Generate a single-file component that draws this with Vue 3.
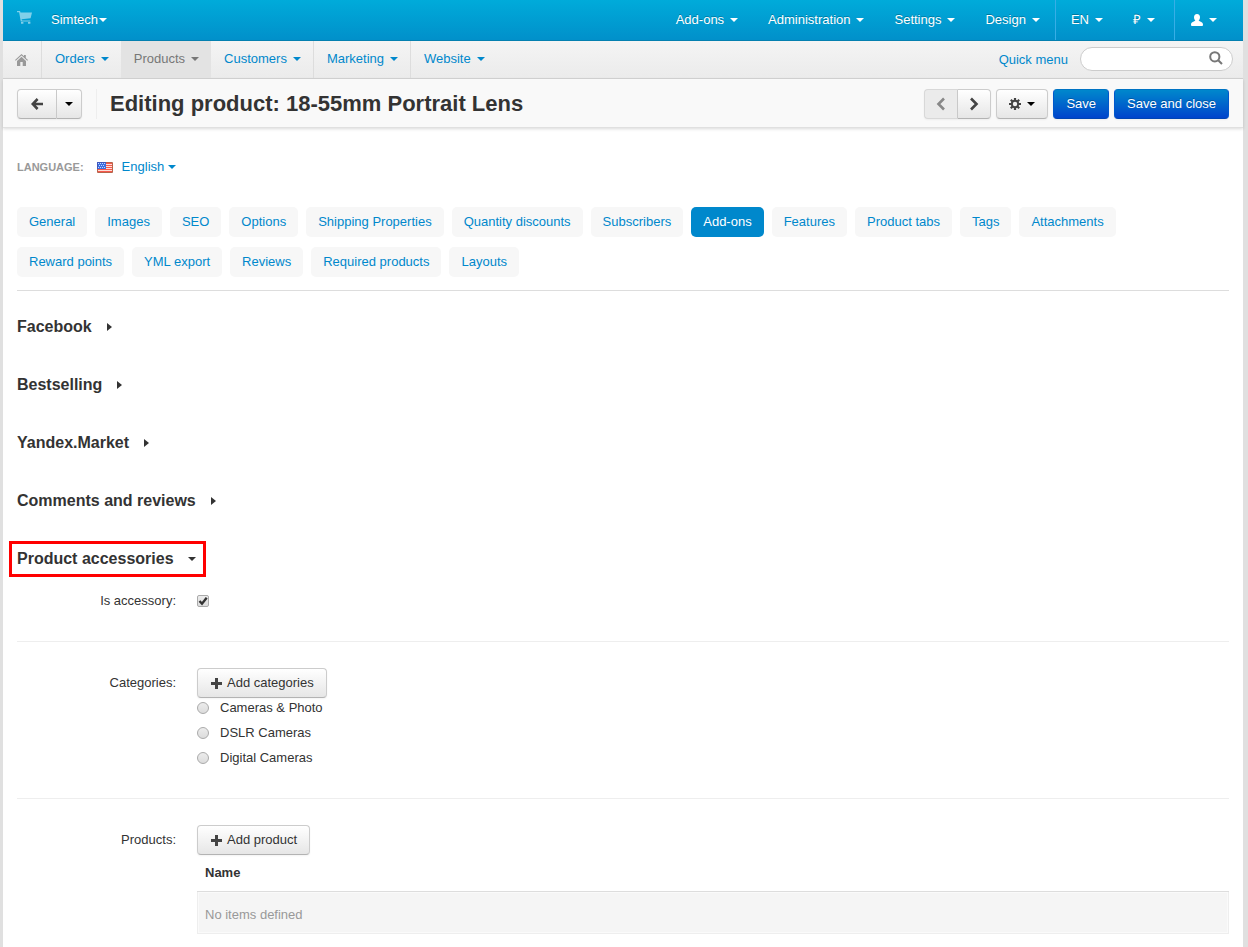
<script setup>
import { ref } from 'vue'

const topMenu = ['Add-ons', 'Administration', 'Settings', 'Design']
const mainMenu = ['Orders', 'Products', 'Customers', 'Marketing', 'Website']
const tabs = [
  'General', 'Images', 'SEO', 'Options', 'Shipping Properties', 'Quantity discounts',
  'Subscribers', 'Add-ons', 'Features', 'Product tabs', 'Tags', 'Attachments',
  'Reward points', 'YML export', 'Reviews', 'Required products', 'Layouts',
]
const activeTab = ref('Add-ons')
const collapsed = ['Facebook', 'Bestselling', 'Yandex.Market', 'Comments and reviews']
const categories = ['Cameras & Photo', 'DSLR Cameras', 'Digital Cameras']
const isAccessory = ref(true)
const category = ref('')
const query = ref('')
</script>

<template>
  <div class="page">
    <nav class="topbar" aria-label="Administration">
      <a href="#" class="cart" aria-label="Storefront">
        <svg width="15" height="13" viewBox="0 0 15 13"><path d="M0 0h3l.5 1.6H15l-1.4 5.6-9 1 .3 1.2h8.400v1.2H3.800L2.100 1.2H0zM4 11h2.400v1.800H4zM11 11h2.400v1.800H11z" /></svg>
      </a>
      <a href="#" class="store">Simtech<i class="caret"></i></a>
      <div class="top-menu">
        <a v-for="m in topMenu" :key="m" href="#">{{ m }}<i class="caret"></i></a>
      </div>
      <div class="top-menu divided locale">
        <a href="#">EN<i class="caret"></i></a>
        <a href="#" class="currency">₽<i class="caret"></i></a>
      </div>
      <div class="top-menu divided account">
        <a href="#" aria-label="Account">
          <svg width="12" height="12" viewBox="0 0 12 12"><path d="M6 0c2 0 3 1.300 3 3.200C9 5 8 6.200 7.600 6.600c.2.900 4.400 1.200 4.400 3.900 0 1-.4 1.500-1.300 1.500H1.300C.4 12 0 11.500 0 10.500 0 7.800 4.200 7.500 4.400 6.600 4 6.200 3 5 3 3.200 3 1.300 4 0 6 0z" /></svg>
          <i class="caret"></i>
        </a>
      </div>
    </nav>

    <nav class="subnav" aria-label="Main">
      <a href="#" class="home" aria-label="Home">
        <svg width="13" height="12" viewBox="0 0 13 12"><path d="M6.500 0 9 2.300V1h1.800v3L13 6.100l-.7.700L6.500 1.600.7 6.800 0 6.100zM6.500 2.800 11 6.900V12H7.700V8H5.300v4H2V6.900z" /></svg>
      </a>
      <a v-for="m in mainMenu" :key="m" href="#" class="menu" :class="{ active: m === 'Products' }">{{ m }}<i class="caret"></i></a>
      <a href="#" class="quick">Quick menu</a>
      <form class="search" @submit.prevent>
        <input v-model="query" type="text" aria-label="Search" />
        <button type="submit" aria-label="Find">
          <svg width="14" height="14" viewBox="0 0 14 14" fill="none" stroke="#777" stroke-width="2"><circle cx="5.800" cy="5.800" r="4.600" /><path d="M9.200 9.200 13 13" /></svg>
        </button>
      </form>
    </nav>

    <header class="actions">
      <div class="group">
        <button class="btn back" aria-label="Back">
          <svg width="12" height="12" viewBox="0 0 12 12" fill="none" stroke="#444" stroke-width="2.600"><path d="M6.600 1 1.700 6l4.900 5M2 6h10" /></svg>
        </button>
        <button class="btn more" aria-label="Recently viewed"><i class="caret"></i></button>
      </div>
      <h1>Editing product: 18-55mm Portrait Lens</h1>
      <div class="group pager">
        <button class="btn" disabled aria-label="Previous">
          <svg width="10" height="14" viewBox="0 0 10 14" fill="none" stroke="#888" stroke-width="2.600"><path d="M8 1.500 2.500 7 8 12.500" /></svg>
        </button>
        <button class="btn" aria-label="Next">
          <svg width="10" height="14" viewBox="0 0 10 14" fill="none" stroke="#444" stroke-width="2.600"><path d="M2 1.500 7.500 7 2 12.500" /></svg>
        </button>
      </div>
      <button class="btn gear" aria-label="Tools">
        <svg width="12" height="12" viewBox="0 0 12 12"><g stroke="#444" stroke-width="2.200"><path d="M6 0v12M0 6h12M1.800 1.800l8.400 8.400M10.200 1.800l-8.400 8.400" /></g><circle cx="6" cy="6" r="4.200" fill="#444" /><circle cx="6" cy="6" r="2.200" fill="#f3f3f3" /></svg>
        <i class="caret"></i>
      </button>
      <button class="btn primary">Save</button>
      <button class="btn primary">Save and close</button>
    </header>

    <main>
      <div class="language">
        <span class="language-label">LANGUAGE:</span>
        <svg width="16" height="11" viewBox="0 0 16 11"><path fill="#fff" d="M0 0h16v11H0z" /><path fill="#f8584c" d="M0 1h16v1H0zM0 3h16v1H0zM0 5h16v1H0zM0 7h16v1H0zM0 9h16v1H0z" /><path fill="#fde0da" d="M8 2h8v1H8zM8 4h8v1H8zM8 6h8v1H8zM0 8h16v1H0z" /><path fill="#3c6fe0" d="M0 0h9v7H0z" /><path fill="#c4d7ff" d="M1 1h1v1H1zM3 1h1v1H3zM5 1h1v1H5zM7 1h1v1H7zM2 3h1v1H2zM4 3h1v1H4zM6 3h1v1H6zM1 5h1v1H1zM3 5h1v1H3zM5 5h1v1H5zM7 5h1v1H7z" /><path fill="none" stroke="#b5654c" d="M.5 7v3.500h15V.5H9" /><path fill="none" stroke="#4056ba" d="M9 .5H.5V7" /></svg>
        <a href="#">English<i class="caret"></i></a>
      </div>

      <div class="tabs" role="tablist">
        <button v-for="t in tabs" :key="t" role="tab" :aria-selected="t === activeTab" :class="{ active: t === activeTab }" @click="activeTab = t">{{ t }}</button>
      </div>

      <h4 v-for="s in collapsed" :key="s"><button>{{ s }}<i class="arrow"></i></button></h4>
      <h4 class="marked"><button aria-expanded="true">Product accessories<i class="caret"></i></button></h4>

      <div class="row accessory">
        <label for="is-accessory">Is accessory:</label>
        <div class="tick">
          <input id="is-accessory" v-model="isAccessory" type="checkbox" />
          <svg v-if="isAccessory" width="12" height="12" viewBox="0 0 12 12" fill="none" stroke="#333" stroke-width="2.400"><path d="M2.500 6 5 8.700 9.700 2.800" /></svg>
        </div>
      </div>

      <div class="row categories">
        <span class="name">Categories:</span>
        <div>
          <button class="btn add">
            <svg width="11" height="11" viewBox="0 0 11 11"><path d="M4 0h3v4h4v3H7v4H4V7H0V4h4z" /></svg>Add categories
          </button>
          <label v-for="c in categories" :key="c" class="option">
            <input v-model="category" type="radio" name="category" :value="c" />{{ c }}
          </label>
        </div>
      </div>

      <div class="row products">
        <span class="name">Products:</span>
        <div>
          <button class="btn add">
            <svg width="11" height="11" viewBox="0 0 11 11"><path d="M4 0h3v4h4v3H7v4H4V7H0V4h4z" /></svg>Add product
          </button>
          <table>
            <thead><tr><th>Name</th></tr></thead>
            <tbody><tr><td>No items defined</td></tr></tbody>
          </table>
        </div>
      </div>
    </main>
  </div>
</template>

<style>
body {
  background: #e0e0e0;
}
</style>

<style scoped>
.page {
  box-sizing: border-box;
  min-height: 100vh;
  margin: 0 5px 0 3px;
  background: #fff;
  color: #333;
  font: 13px/20px "Liberation Sans", Arial, sans-serif;
}
.page * { box-sizing: border-box; }
a { color: #08c; text-decoration: none; }
button, input { margin: 0; font: inherit; }
svg { display: block; flex: none; }
.caret {
  flex: none;
  width: 0;
  height: 0;
  border: 4px solid transparent;
  border-top-color: currentColor;
  border-bottom: 0;
}

.topbar {
  display: flex;
  height: 41px;
  padding-right: 11px;
  border-bottom: 1px solid #0480b0;
  background: linear-gradient(#00abda, #0190ca);
}
.topbar a {
  display: flex;
  align-items: center;
  gap: 6px;
  color: #fff;
  text-shadow: 0 -1px 0 rgba(0, 0, 0, .25);
}
.topbar svg { fill: #fff; }
.topbar .cart { padding: 0 19px 6px 14px; }
.cart svg { opacity: .5; }
.topbar .store { gap: 1px; margin-right: auto; }
.top-menu { display: flex; }
.top-menu a { padding: 0 15px; }
.divided { border-left: 1px solid #38aee6; }
.locale .currency { padding-right: 19px; font-size: 13px; }
.account a { padding-left: 16px; }

.subnav {
  display: flex;
  align-items: center;
  height: 38px;
  padding-right: 10px;
  border-bottom: 1px solid #d4d4d4;
  background: linear-gradient(#f4f4f4, #ebebeb);
}
.home, .menu { display: flex; align-items: center; height: 37px; }
.home { width: 39px; padding-left: 12px; border-right: 1px solid #ddd; }
.home svg { fill: #999; }
.menu { gap: 6px; padding: 0 12px 2px 13px; border-right: 1px solid #ddd; }
.menu:nth-of-type(2), .menu:nth-of-type(3), .menu:nth-of-type(6) { border-right: 0; }
.menu.active { background: #e3e3e3; color: #777; }
.quick { margin-left: auto; margin-right: 12px; }
.search { display: flex; width: 153px; height: 24px; margin-bottom: 2px; border: 1px solid #ccc; border-radius: 12px; background: #fff; }
.search input { flex: 1; min-width: 0; padding: 0 0 0 12px; border: 0; border-radius: 12px; background: transparent; outline: 0; }
.search button { padding: 0 9px 2px; border: 0; background: transparent; }

.actions {
  display: flex;
  align-items: center;
  gap: 5px;
  height: 49px;
  padding: 2px 14px 0;
  border-bottom: 1px solid #e0e0e0;
  background: #f9f9f9;
  box-shadow: 0 1px 3px rgba(0, 0, 0, .15);
}
.actions h1 {
  flex: 1;
  margin: 0 0 0 9px;
  padding-left: 13px;
  border-left: 1px solid #eee;
  font-size: 22px;
  line-height: 30px;
}
.btn {
  display: flex;
  align-items: center;
  justify-content: center;
  height: 30px;
  padding: 0 12px;
  border: 1px solid #ccc;
  border-bottom-color: #b3b3b3;
  border-radius: 4px;
  background: linear-gradient(#fff, #e6e6e6);
  box-shadow: 0 1px 2px rgba(0, 0, 0, .05);
  color: #333;
}
.btn .caret { border-top-color: #000; }
.btn:disabled { background: #ebebeb; border-color: #d8d8d8; }
.group { display: flex; }
.group .btn:first-child { border-radius: 4px 0 0 4px; }
.group .btn:last-child { border-left: 0; border-radius: 0 4px 4px 0; }
.back { width: 40px; }
.more { width: 25px; padding: 0; }
.pager .btn { width: 34px; padding: 0; }
.pager .btn:first-child { border-right-color: #ccc; }
.pager .btn:last-child { width: 33px; }
.gear { gap: 6px; width: 52px; }
.primary {
  border-color: #0074c4 #0058cc #0044b3;
  background: linear-gradient(#0088cc, #0044cc);
  color: #fff;
  text-shadow: 0 -1px 0 rgba(0, 0, 0, .25);
}

main { padding: 29px 14px 13px; }
.language { display: flex; align-items: center; height: 20px; }
.language-label { margin-right: 13px; color: #999; font-size: 11px; font-weight: bold; }
.language a { display: flex; align-items: center; gap: 4px; margin-left: 9px; }
.tabs {
  display: flex;
  flex-wrap: wrap;
  gap: 10px 8px;
  margin: 30px 0 26px;
  padding-bottom: 13px;
  border-bottom: 1px solid #ddd;
}
.tabs button {
  height: 30px;
  padding: 0 12px;
  border: 0;
  border-radius: 5px;
  background: #f7f7f7;
  color: #08c;
}
.tabs .active { background: #08c; color: #fff; }

h4 { margin: 0 0 38px; font-size: 16px; line-height: 20px; }
h4 button {
  display: flex;
  align-items: center;
  height: 20px;
  padding: 0 2px 0 0;
  border: 0;
  background: transparent;
  color: #333;
}
h4 .caret { margin-left: 14px; }
.arrow {
  border: 4px solid transparent;
  border-right: 0;
  border-left: 5px solid currentColor;
  margin-left: 15px;
}
.marked { margin-bottom: 22px; }
.marked button { outline: 3px solid #f00; outline-offset: 5px; }

.row { display: grid; grid-template-columns: 159px 1fr; gap: 21px; }
.row > label, .name { text-align: right; }
.accessory { padding-bottom: 30px; border-bottom: 1px solid #eee; }
.tick { display: grid; align-items: center; justify-items: start; }
.tick > * { grid-area: 1 / 1; }
.tick svg { pointer-events: none; }
input[type="checkbox"], input[type="radio"] {
  width: 12px;
  height: 12px;
  border: 1px solid #aaa;
  background: linear-gradient(#ececec, #dcdcdc);
  appearance: none;
}
input[type="checkbox"] { border-radius: 2px; }
input[type="radio"] { border-radius: 50%; }
input[type="radio"]:checked { background: #555; box-shadow: inset 0 0 0 2px #e5e5e5; }
.categories { padding: 26px 0 30px; border-bottom: 1px solid #eee; }
.products { padding-top: 26px; }
.name { padding-top: 5px; }
.add { padding: 0 12px 0 13px; }
.add svg { margin-right: 5px; fill: #444; }
.option { display: flex; align-items: center; gap: 11px; margin-bottom: 5px; }
.option:last-child { margin-bottom: 0; }
table { width: 100%; border-spacing: 0; }
th { padding: 8px; text-align: left; border-bottom: 1px solid #ddd; }
td { height: 42px; padding: 4px 8px 0 7px; border: 1px solid #eee; border-top: 0; background: #f5f5f5; box-shadow: inset 0 0 0 1px #fafafa; color: #999; }
</style>
